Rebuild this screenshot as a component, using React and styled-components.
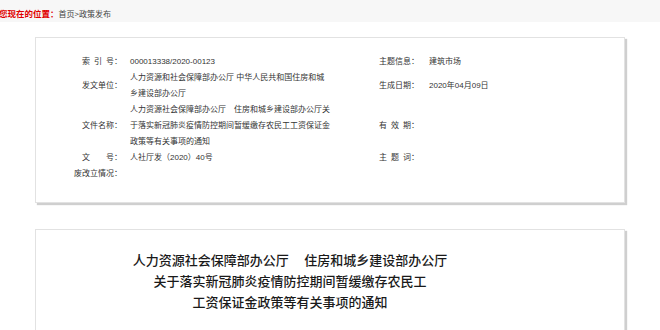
import React from "react";
import styled, { createGlobalStyle } from "styled-components";

const Global = createGlobalStyle`
  html, body { margin: 0; padding: 0; background: #fff; }
  body { font-family: "Liberation Sans", "Noto Sans CJK SC", sans-serif; color: #333; }
`;

const Page = styled.div`
  width: 660px;
  height: 330px;
  overflow: hidden;
  background: #fff;
`;

const Crumbs = styled.div`
  height: 22px;
  background: #f7f7f7;
  display: flex;
  align-items: center;
  padding-top: 4px;
  box-sizing: border-box;
  font-size: 8px;
  font-family: "Noto Sans CJK SC", sans-serif;
  white-space: nowrap;
`;

const Here = styled.span`
  color: #e00000;
  font-weight: 700;
  font-size: 8.5px;
  margin-left: -1px;
`;

const Path = styled.span`
  color: #444;
`;

const Card = styled.section`
  margin: ${(p) => p.$mt}px 0 0 35px;
  width: 590px;
  box-sizing: border-box;
  border: 1px solid #e2e2e2;
  box-shadow: 2px 2px 1px #cfcfcf;
  background: #fff;
  padding: ${(p) => p.$pad};
`;

const Table = styled.div`
  display: grid;
  grid-template-columns: 48px 241px 42px 1fr;
  column-gap: 8px;
  align-items: center;
  font-family: "Liberation Sans", "Noto Sans CJK SC", sans-serif;
  font-size: 8px;
  line-height: 16px;
  color: #333;
`;

const Label = styled.div`
  text-align: ${(p) => (p.$right ? "right" : "left")};
  white-space: nowrap;
  color: #333;
`;

const Value = styled.div`
  padding-right: ${(p) => p.$pr || 0}px;
  word-break: break-all;
`;

const Title = styled.h1`
  margin: 0;
  text-align: center;
  font-family: "Noto Sans CJK SC", serif;
  font-weight: 500;
  font-size: 13px;
  line-height: 21px;
  color: #1a1a1a;
`;

const rows = [
  ["索\u2002引\u2002号：", "000013338/2020-00123", "主题信息：", "建筑市场"],
  ["发文单位：", "人力资源和社会保障部办公厅 中华人民共和国住房和城乡建设部办公厅", "生成日期：", "2020年04月09日"],
  ["文件名称：", "人力资源社会保障部办公厅\u3000住房和城乡建设部办公厅关于落实新冠肺炎疫情防控期间暂缓缴存农民工工资保证金政策等有关事项的通知", "有\u2002效\u2002期：", ""],
  ["文\u3000\u3000号：", "人社厅发（2020）40号", "主\u2002题\u2002词：", ""],
  ["废改立情况：", "", "", ""],
];

export default function App() {
  return (
    <Page>
      <Global />
      <Crumbs>
        <Here>您现在的位置：</Here>
        <Path>首页&gt;政策发布</Path>
      </Crumbs>
      <Card $mt={15} $pad="16px 0 20px 38px">
        <Table>
          {rows.map((r, i) => (
            <React.Fragment key={i}>
              <Label $right>{r[0]}</Label>
              <Value $pr={41}>{r[1]}</Value>
              <Label>{r[2]}</Label>
              <Value>{r[3]}</Value>
            </React.Fragment>
          ))}
        </Table>
      </Card>
      <Card $mt={26} $pad="19px 80px 40px 0">
        <Title>人力资源社会保障部办公厅{"\u3000\u2009"}住房和城乡建设部办公厅</Title>
        <Title>关于落实新冠肺炎疫情防控期间暂缓缴存农民工</Title>
        <Title>工资保证金政策等有关事项的通知</Title>
      </Card>
    </Page>
  );
}
